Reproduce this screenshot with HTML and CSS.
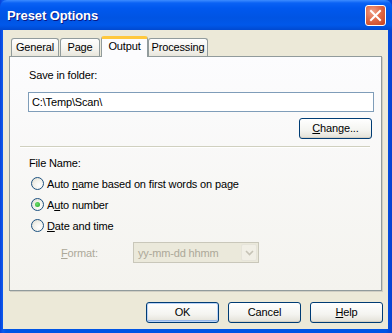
FILE: index.html
```html
<!DOCTYPE html>
<html lang="en">
<head>
    <meta charset="UTF-8">
    <title>Preset Options</title>
    <link rel="stylesheet" href="styles.css">
</head>
<body>
    <div class="window">
        <div class="titlebar">
            <span class="title">Preset Options</span>
            <span class="close-btn">
                <svg width="13" height="13" viewBox="0 0 13 13">
                    <path d="M2 2 L11 11 M11 2 L2 11" stroke="#fff" stroke-width="2" stroke-linecap="square"/>
                </svg>
            </span>
        </div>
        <div class="client">
            <div class="tabs">
                <div class="tab tab-general">General</div>
                <div class="tab tab-page">Page</div>
                <div class="tab tab-output active">Output</div>
                <div class="tab tab-processing">Processing</div>
            </div>
            <div class="panel">
                <div class="label first">Save in folder:</div>
                <div class="textbox">C:\Temp\Scan\</div>
                <div class="change-row">
                    <button class="btn change"><u>C</u>hange...</button>
                </div>
                <div class="separator"></div>
                <div class="label file-name">File Name:</div>
                <div class="radios">
                    <div class="radio-row"><span class="radio"></span><span>Auto <u>n</u>ame based on first words on page</span></div>
                    <div class="radio-row"><span class="radio checked"></span><span>A<u>u</u>to number</span></div>
                    <div class="radio-row"><span class="radio"></span><span><u>D</u>ate and time</span></div>
                </div>
                <div class="format-row">
                    <span class="format-label"><u>F</u>ormat:</span>
                    <div class="select">
                        <span class="select-text">yy-mm-dd hhmm</span>
                        <span class="select-arrow">
                            <svg width="9" height="6" viewBox="0 0 9 6">
                                <path d="M1 1 L4.5 4.5 L8 1" stroke="#c6c3b6" stroke-width="1.6" fill="none"/>
                            </svg>
                        </span>
                    </div>
                </div>
            </div>
            <div class="buttons">
                <button class="btn default">OK</button>
                <button class="btn">Cancel</button>
                <button class="btn"><u>H</u>elp</button>
            </div>
        </div>
    </div>
</body>
</html>
```

FILE: styles.css
```css
body {
    margin: 0;
    font-family: "Liberation Sans", Arial, sans-serif;
    font-size: 11px;
    letter-spacing: -0.15px;
    color: #000;
}
.window {
    width: 392px;
    height: 333px;
    display: flex;
    flex-direction: column;
    background: linear-gradient(to right, #0842d8 0, #0c5cf0 3px, #0055e5 6px, #0055e5 386px, #0a3fd0 392px);
    box-sizing: border-box;
}
.titlebar {
    height: 30px;
    display: flex;
    align-items: center;
    padding: 0 6px 0 7px;
    background: linear-gradient(#3d8cff 0, #0a62f5 3px, #0058ee 8px, #0054e3 18px, #0058ea 25px, #0049d0 30px);
    border-radius: 7px 7px 0 0;
}
.title {
    color: #fff;
    font-weight: bold;
    font-size: 13px;
    text-shadow: 1px 1px #0a1883;
    letter-spacing: -0.1px;
}
.close-btn {
    margin-left: auto;
    width: 19px;
    height: 19px;
    border: 1px solid #fff;
    border-radius: 3px;
    background: radial-gradient(circle at 35% 30%, #f0a088 0, #e06a48 45%, #c8401c 100%);
    display: flex;
    align-items: center;
    justify-content: center;
    margin-top: 1px;
}
.client {
    flex: 1;
    margin: 0 4px 4px 3px;
    background: #ece9d8;
    display: flex;
    flex-direction: column;
}
.tabs {
    display: flex;
    align-items: flex-end;
    margin: 6px 0 0 8px;
    height: 20px;
}
.tab {
    height: 18px;
    box-sizing: border-box;
    border: 1px solid #919b9c;
    border-bottom: none;
    border-radius: 3px 3px 0 0;
    background: linear-gradient(#fefefe, #f4f3ee 60%, #e8e6dc);
    text-align: center;
    line-height: 17px;
    margin-right: 1px;
}
.tab-general { width: 48px; }
.tab-page { width: 40px; }
.tab-output { width: 47px; margin-right: 0; }
.tab-processing { width: 60px; }
.tab.active {
    height: 21px;
    margin-bottom: -1px;
    position: relative;
    z-index: 1;
    background: #fcfcfe;
    border-top: 3px solid #ffc83c;
    border-radius: 3px 3px 0 0;
    line-height: 15px;
}
.panel {
    margin-left: 6px;
    width: 373px;
    height: 235px;
    box-sizing: border-box;
    border: 1px solid #919b9c;
    box-shadow: 1px 1px 0 #d0cec3;
    background: linear-gradient(#fcfcfe, #f4f3ee);
    padding: 0 0 0 18px;
}
.label {
    line-height: 14px;
}
.label.first {
    margin-top: 11px;
    padding-left: 1px;
}
.textbox {
    margin-top: 10px;
    width: 346px;
    height: 20px;
    box-sizing: border-box;
    border: 1px solid #7f9db9;
    background: #fff;
    line-height: 18px;
    padding-left: 3px;
}
.change-row {
    display: flex;
    justify-content: flex-end;
    width: 344px;
    margin-top: 6px;
}
.btn {
    font-family: "Liberation Sans", Arial, sans-serif;
    font-size: 11px;
    letter-spacing: -0.15px;
    color: #000;
    width: 73px;
    height: 21px;
    box-sizing: border-box;
    border: 1px solid #003c74;
    border-radius: 3px;
    background: linear-gradient(#ffffff, #f4f4f0 60%, #e3e1d7);
    box-shadow: inset 0 -1px 0 #d6d0c5;
    padding: 0;
    line-height: 19px;
}
.separator {
    margin: 7px 0 0 -8px;
    width: 350px;
    height: 1px;
    background: #d0d0bf;
    border-bottom: 1px solid #fff;
}
.label.file-name {
    margin-top: 8px;
    padding-left: 1px;
}
.radios {
    margin-top: 3px;
}
.radio-row {
    height: 21px;
    display: flex;
    align-items: center;
    padding-left: 3px;
    gap: 3px;
}
.radio {
    width: 13px;
    height: 13px;
    box-sizing: border-box;
    border: 1px solid #1c5180;
    border-radius: 50%;
    background: radial-gradient(circle at 65% 65%, #ffffff 0, #f2f1ea 50%, #d8d6cb 100%);
    display: flex;
    align-items: center;
    justify-content: center;
}
.radio.checked::after {
    content: "";
    width: 5px;
    height: 5px;
    border-radius: 50%;
    background: radial-gradient(circle at 40% 40%, #6ee06e, #21a121);
}
.format-row {
    margin-top: 6px;
    display: flex;
    align-items: center;
    height: 21px;
}
.format-label {
    color: #aca899;
    margin-left: 33px;
    width: 72px;
}
.select {
    width: 126px;
    height: 21px;
    box-sizing: border-box;
    border: 1px solid #c9c7ba;
    background: #ebe9db;
    display: flex;
    align-items: center;
    padding: 1px;
}
.select-text {
    flex: 1;
    color: #aca899;
    padding-left: 3px;
}
.select-arrow {
    width: 16px;
    height: 17px;
    border-radius: 2px;
    background: #f1efe6;
    border: 1px solid #e6e4da;
    box-sizing: border-box;
    display: flex;
    align-items: center;
    justify-content: center;
}
.buttons {
    display: flex;
    justify-content: flex-end;
    gap: 9px;
    margin: 11px 5px 0 0;
}
.btn.default {
    box-shadow: inset 0 0 0 1px #bad3f7, inset 0 -2px 0 #97b8e9;
}
```
